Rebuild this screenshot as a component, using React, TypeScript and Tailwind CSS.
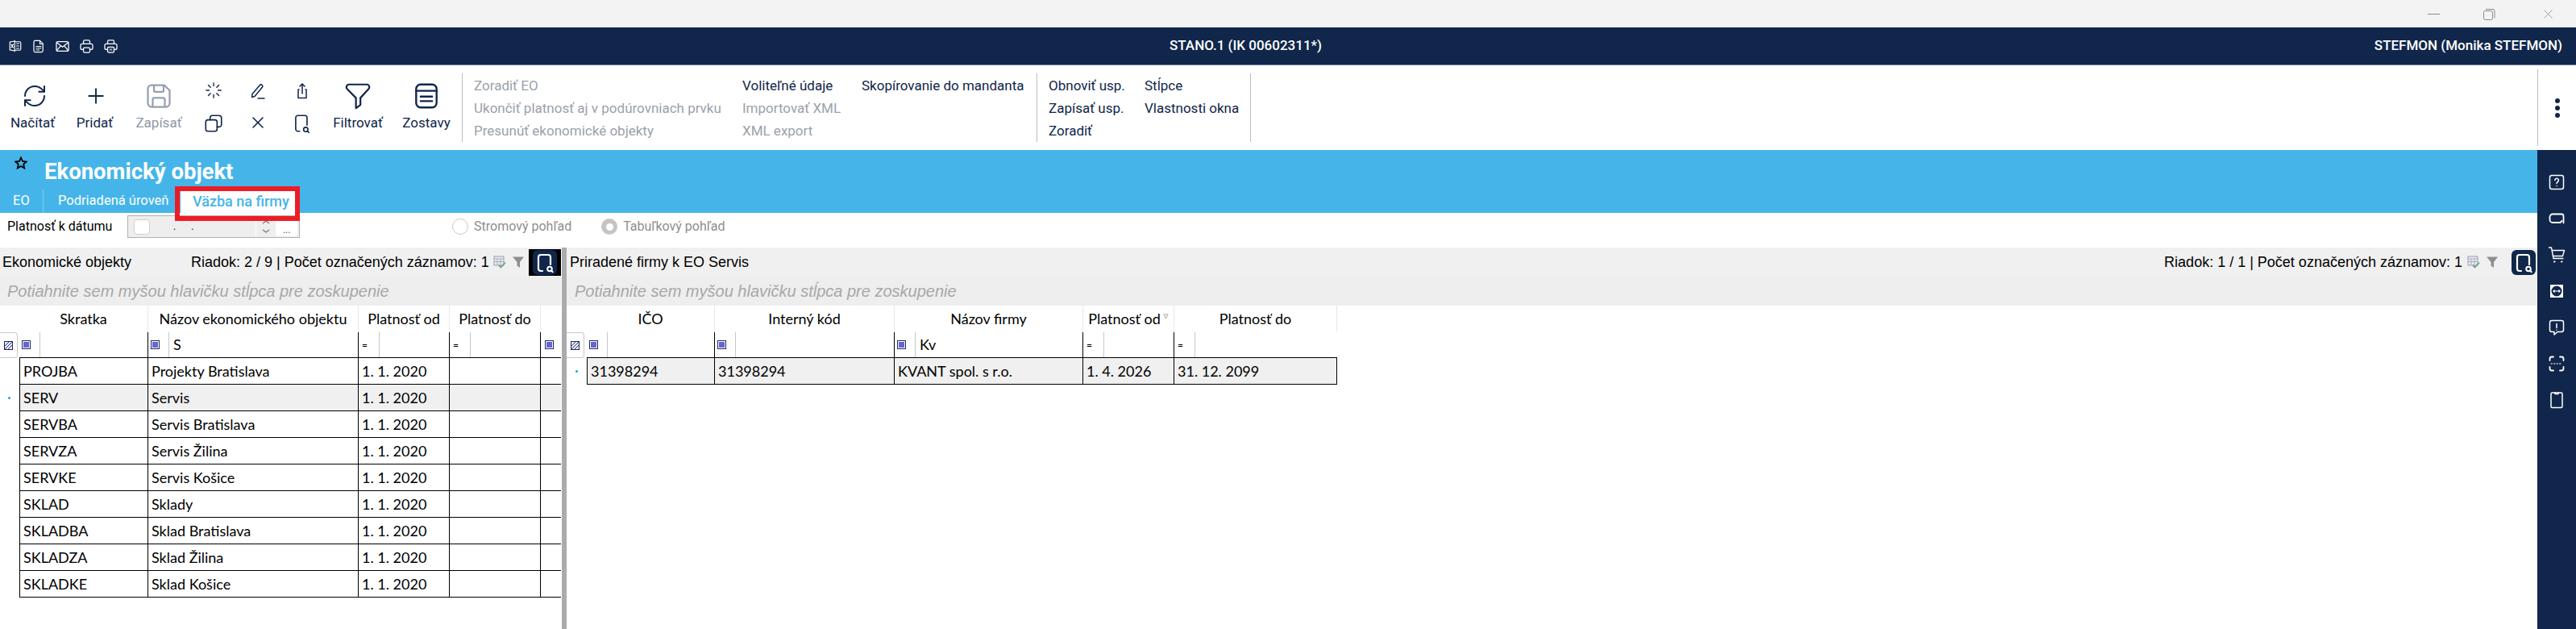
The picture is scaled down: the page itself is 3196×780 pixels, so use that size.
import { Loader, Plus, RefreshCw, X } from "lucide-react";
import type { ReactNode } from "react";

function Ico({ className, children, vb = "0 0 24 24", sw = 1.6 }: { className: string; children: ReactNode; vb?: string; sw?: number }) {
  return (
    <svg viewBox={vb} className={className} fill="none" stroke="currentColor" strokeWidth={sw} strokeLinecap="round" strokeLinejoin="round">
      {children}
    </svg>
  );
}

function TopIcons() {
  return (
    <div className="flex items-center gap-[11px] pl-[10px] text-white">
      <Ico className="w-[18px] h-[18px]">
        <path d="M11 3v18M11 4 3 5.500v13l8 1.500M11 5h8a2 2 0 0 1 2 2v10a2 2 0 0 1-2 2h-8M14 8h4M14 12h4M14 16h4M5.500 9.500l3 5M8.500 9.500l-3 5" />
      </Ico>
      <Ico className="w-[18px] h-[19px]">
        <path d="M6 2.500h8l5 5V19a2.500 2.500 0 0 1-2.500 2.500h-10A2.500 2.500 0 0 1 4 19V5a2.500 2.500 0 0 1 2-2.500zM14 2.500V8h5M8 12h8M8 15h8M8 18h5" />
      </Ico>
      <Ico className="w-[19px] h-[19px]">
        <rect x="2.500" y="4.500" width="19" height="15" rx="2.500" />
        <path d="m3 6 9 7 9-7M3 18.500l6.500-7.500M21 18.500 14.500 11" />
      </Ico>
      <Ico className="w-[19px] h-[19px]">
        <path d="M7 8V4.500a2 2 0 0 1 2-2h6a2 2 0 0 1 2 2V8M7 17H5a2.500 2.500 0 0 1-2.500-2.500v-4A2.500 2.500 0 0 1 5 8h14a2.500 2.500 0 0 1 2.500 2.500v4A2.500 2.500 0 0 1 19 17h-2" />
        <rect x="7" y="14" width="10" height="7.500" rx="1.500" />
      </Ico>
      <Ico className="w-[19px] h-[19px]">
        <path d="M7 8V4.500a2 2 0 0 1 2-2h6a2 2 0 0 1 2 2V8M7 17H5a2.500 2.500 0 0 1-2.500-2.500v-4A2.500 2.500 0 0 1 5 8h14a2.500 2.500 0 0 1 2.500 2.500v4A2.500 2.500 0 0 1 19 17h-2" />
        <rect x="7" y="13" width="10" height="8.500" rx="1.500" />
        <path d="m10 15.500 4 3M14 15.500l-4 3" strokeWidth={1} />
      </Ico>
    </div>
  );
}

function BigButton({ label, icon, width, muted, labelClass = "" }: { label: string; icon: ReactNode; width: string; muted?: boolean; labelClass?: string }) {
  return (
    <div className={`flex flex-col items-center ${width}`}>
      <div className={`h-[34px] flex items-center ${muted ? "text-[#94a0b0]" : "text-[#10264a]"}`}>{icon}</div>
      <span className={`mt-[6px] text-[17px] leading-[20px] whitespace-nowrap ${labelClass} ${muted ? "text-[#8e98a6]" : "text-[#10264a]"}`}>{label}</span>
    </div>
  );
}

function MenuCol({ items, width }: { items: { label: string; muted?: boolean }[]; width: string }) {
  return (
    <div className={`flex flex-col gap-[8px] ${width}`}>
      {items.map((item) => (
        <span key={item.label} className={`text-[17px] leading-[20px] whitespace-nowrap ${item.muted ? "text-[#9aa1ab]" : "text-[#10264a]"}`}>
          {item.label}
        </span>
      ))}
    </div>
  );
}

function Toolbar() {
  return (
    <div className="h-[105px] flex items-center bg-white font-['Roboto',sans-serif]">
      <div className="flex items-start w-[573px] pl-[5px] pt-[1px]">
        <BigButton
          label="Načítať"
          width="w-[76px]"
          labelClass="-ml-[5px]"
          icon={<RefreshCw className="w-[32px] h-[32px]" strokeWidth={1.5} />}
        />
        <BigButton label="Pridať" width="w-[76px]" labelClass="-ml-[3px]" icon={<Plus className="w-[30px] h-[30px]" strokeWidth={1.5} />} />
        <BigButton
          label="Zapísať"
          width="w-[80px]"
          muted
          icon={
            <Ico className="w-[36px] h-[36px]" sw={1.5}>
              <path d="M6 3h10.500L21 7.500V18a3 3 0 0 1-3 3H6a3 3 0 0 1-3-3V6a3 3 0 0 1 3-3zM8 3v4.500a1 1 0 0 0 1 1h6a1 1 0 0 0 1-1V3M7 21v-6a1.500 1.500 0 0 1 1.500-1.500h7A1.500 1.500 0 0 1 17 15v6" />
            </Ico>
          }
        />
        <div className="grid grid-cols-[55px_55px_55px] gap-y-[15px] justify-items-center w-[165px] text-[#10264a] -mt-[1px]">
          <Loader className="w-[22px] h-[22px]" strokeWidth={1.5} />
          <Ico className="w-[24px] h-[24px]" sw={1.5}>
            <path d="m5 15.500 9.500-11a2 2 0 0 1 3 2.600L8 18.500l-3.500 1zM12 21h8" />
          </Ico>
          <Ico className="w-[24px] h-[24px]" sw={1.5}>
            <path d="M8 10H7v10.500h10V10h-1M12 15V3M9 6l3-3 3 3" />
          </Ico>
          <Ico className="w-[26px] h-[26px]" sw={1.5}>
            <rect x="3" y="8" width="13" height="13" rx="2.500" />
            <path d="M8 8V5.500A2.500 2.500 0 0 1 10.500 3H18a3 3 0 0 1 3 3v7.500a2.500 2.500 0 0 1-2.500 2.500H16" />
          </Ico>
          <X className="w-[24px] h-[24px]" strokeWidth={1.6} />
          <Ico className="w-[26px] h-[26px]" sw={1.5}>
            <path d="M9 21H7a2.500 2.500 0 0 1-2.500-2.500v-13A2.500 2.500 0 0 1 7 3h8a2.500 2.500 0 0 1 2.500 2.500V14" />
            <circle cx="16" cy="19" r="2.500" />
            <path d="m18 21 1.500 1.500" />
          </Ico>
        </div>
        <BigButton
          label="Filtrovať"
          width="w-[84px]"
          icon={
            <Ico className="w-[38px] h-[38px]" sw={1.4}>
              <path d="M3 5a2 2 0 0 1 2-2h14a2 2 0 0 1 2 2c0 1-.5 1.500-1 2l-6 6.500V19l-3.500 2.500v-8L4 7c-.5-.5-1-1-1-2z" />
            </Ico>
          }
        />
        <BigButton
          label="Zostavy"
          width="w-[86px]"
          icon={
            <Ico className="w-[38px] h-[38px]" sw={1.5}>
              <rect x="4" y="3" width="16" height="18" rx="3.500" />
              <path d="M4 8h16M7.500 12.500h9M7.500 16h9" />
            </Ico>
          }
        />
      </div>
      <div className="w-px h-[85px] bg-[#bdbdbd]" />
      <div className="flex pl-[14px] w-[712px]">
        <MenuCol
          width="w-[333px]"
          items={[
            { label: "Zoradiť EO", muted: true },
            { label: "Ukončiť platnosť aj v podúrovniach prvku", muted: true },
            { label: "Presunúť ekonomické objekty", muted: true },
          ]}
        />
        <MenuCol
          width="w-[148px]"
          items={[{ label: "Voliteľné údaje" }, { label: "Importovať XML", muted: true }, { label: "XML export", muted: true }]}
        />
        <MenuCol width="w-[200px]" items={[{ label: "Skopírovanie do mandanta" }]} />
      </div>
      <div className="w-px h-[85px] bg-[#bdbdbd]" />
      <div className="flex pl-[14px] w-[264px]">
        <MenuCol width="w-[119px]" items={[{ label: "Obnoviť usp." }, { label: "Zapísať usp." }, { label: "Zoradiť" }]} />
        <MenuCol width="w-[130px]" items={[{ label: "Stĺpce" }, { label: "Vlastnosti okna" }]} />
      </div>
      <div className="w-px h-[85px] bg-[#bdbdbd]" />
      <div className="flex-1" />
      <div className="w-px h-[95px] bg-[#bdbdbd]" />
      <div className="w-[47px] flex flex-col items-center gap-[3px]">
        <span className="w-[6px] h-[6px] rounded-full bg-[#10264a]" />
        <span className="w-[6px] h-[6px] rounded-full bg-[#10264a]" />
        <span className="w-[6px] h-[6px] rounded-full bg-[#10264a]" />
      </div>
    </div>
  );
}

function Sidebar() {
  return (
    <div className="w-[48px] h-full bg-[#10264a] flex flex-col items-center gap-[21px] pt-[28px] text-white">
      <Ico className="w-[24px] h-[24px]" sw={1.5}>
        <rect x="3.500" y="3.500" width="17" height="17" rx="2.500" />
        <path d="M9.800 9.500a2.300 2.300 0 1 1 3.500 2c-.9.500-1.300 1-1.300 2M12 16.500v.1" />
      </Ico>
      <Ico className="w-[24px] h-[24px]" sw={1.8}>
        <path d="M20.500 17.500V9a2.500 2.500 0 0 0-2.500-2.500H7A3.500 3.500 0 0 0 3.500 10v3.500A3.500 3.500 0 0 0 7 17h9.500l2-2" />
      </Ico>
      <Ico className="w-[24px] h-[24px]" sw={1.4}>
        <path d="M2.500 3h3l2.500 13.500h12M6.500 6.500h15L19.500 13.500H8" />
        <path d="M9 20.500h.5M18 20.500h.5" strokeWidth={2} />
      </Ico>
      <svg viewBox="0 0 24 24" className="w-[24px] h-[24px]">
        <rect x="4" y="4" width="16" height="16" fill="#ffffff" />
        <circle cx="12" cy="12" r="6.500" fill="#10264a" />
        <path d="M7.500 12h9M9.500 10.500 8 12l1.500 1.500M14.500 10.500 16 12l-1.500 1.500" stroke="#ffffff" strokeWidth="1.200" fill="none" />
      </svg>
      <Ico className="w-[24px] h-[24px]" sw={1.5}>
        <path d="M6 3.500h12A2.500 2.500 0 0 1 20.500 6v9a2.500 2.500 0 0 1-2.500 2.500h-5L9 21v-3.500H6A2.500 2.500 0 0 1 3.500 15V6A2.500 2.500 0 0 1 6 3.500zM12 7.500v5M12 15v.1" />
      </Ico>
      <Ico className="w-[24px] h-[24px]" sw={1.8}>
        <path d="M8 3.500H6A2.500 2.500 0 0 0 3.500 6v2M16 3.500h2A2.500 2.500 0 0 1 20.500 6v2M8 20.500H6A2.500 2.500 0 0 1 3.500 18v-2M16 20.500h2a2.500 2.500 0 0 0 2.500-2.500v-2" />
        <path d="M5 12h14" strokeWidth={1} strokeDasharray="1.500 2" />
      </Ico>
      <Ico className="w-[24px] h-[24px]" sw={1.5}>
        <rect x="5" y="3" width="14" height="18.500" rx="1.500" />
        <path d="M10 3v1.500h4V3" />
      </Ico>
    </div>
  );
}

function BlueBox() {
  return (
    <span className="w-[11px] h-[11px] border border-[#1c2a5a] bg-white flex items-center justify-center shrink-0">
      <span className="w-[7px] h-[7px] bg-[#6a63cf]" />
    </span>
  );
}

function SelectAll() {
  return (
    <div className="w-[22px] h-[32px] rounded-r-[4px] border border-l-0 border-[#c9c9c9] flex items-center justify-center shrink-0">
      <svg viewBox="0 0 11 11" className="w-[11px] h-[11px]">
        <rect x="0.500" y="0.500" width="10" height="10" fill="#e8e6f7" stroke="#1c2a5a" />
        <path d="M1 10 10 1M1 6l5-5M5 10l5-5" stroke="#1c2a5a" strokeWidth="0.900" />
      </svg>
    </div>
  );
}

function TableIcons() {
  return (
    <div className="flex items-center gap-[7px] shrink-0">
      <svg viewBox="0 0 16 16" className="w-[16px] h-[16px]">
        <rect x="1" y="1" width="12" height="11" fill="#e9e9ef" stroke="#9a9fb0" />
        <path d="M1 4h12M1 7.500h12M5 4v8M9 4v8" stroke="#9a9fb0" strokeWidth="0.800" />
        <path d="m7 12 2.500 2.500L15 8.500" fill="none" stroke="#5fa886" strokeWidth="1.800" />
      </svg>
      <svg viewBox="0 0 16 16" className="w-[16px] h-[16px]">
        <path d="M1 1.500h14L10 8v7L6.500 12.500V8z" fill="#8f8f8f" />
      </svg>
    </div>
  );
}

function SearchButton() {
  return (
    <div className="w-[30px] h-[31px] rounded-[6px] bg-[#10264a] flex items-center justify-center">
      <svg viewBox="0 0 30 31" className="w-[30px] h-[31px]" fill="none" stroke="#ffffff" strokeWidth="2.200" strokeLinecap="round">
        <path d="M12 26H10a3 3 0 0 1-3-3V9a3 3 0 0 1 3-3h9a3 3 0 0 1 3 3v9" />
        <circle cx="21" cy="23.500" r="2.800" strokeWidth="2" />
        <path d="m23.200 25.800 1.500 1.500" strokeWidth="2" />
      </svg>
    </div>
  );
}

const LEFT_ROWS = [
  ["PROJBA", "Projekty Bratislava"],
  ["SERV", "Servis"],
  ["SERVBA", "Servis Bratislava"],
  ["SERVZA", "Servis Žilina"],
  ["SERVKE", "Servis Košice"],
  ["SKLAD", "Sklady"],
  ["SKLADBA", "Sklad Bratislava"],
  ["SKLADZA", "Sklad Žilina"],
  ["SKLADKE", "Sklad Košice"],
];

function HeadCell({ width, children, last }: { width: string; children?: ReactNode; last?: boolean }) {
  return (
    <div className={`${width} h-full flex items-center justify-center whitespace-nowrap text-[18px] ${last ? "" : "border-r border-[#e8e8e8]"}`}>
      {children}
    </div>
  );
}

function FilterCell({ width, gap, mark, value, last }: { width: string; gap: string; mark: ReactNode; value?: string; last?: boolean }) {
  return (
    <div className={`${width} h-full flex items-stretch ${last ? "" : "border-r border-black"}`}>
      <div className={`${gap} flex items-center pl-[3px] border-r border-[#c8c8c8]`}>{mark}</div>
      <div className="flex-1 flex items-center pl-[5px] text-[18px]">{value}</div>
    </div>
  );
}

const Eq = <span className="text-[12px] leading-none pl-[1px]">=</span>;

function Cell({ width, children, last }: { width: string; children?: ReactNode; last?: boolean }) {
  return (
    <div className={`${width} h-full flex items-center pl-[4px] whitespace-nowrap text-[18px] ${last ? "" : "border-r border-black"}`}>{children}</div>
  );
}

function LeftPane() {
  return (
    <div className="w-[696px] h-full flex flex-col">
      <div className="h-[36px] bg-[#f0f0f0] flex items-center font-['Liberation_Sans',sans-serif] text-[18px] text-black">
        <span className="pl-[3px] w-[237px] whitespace-nowrap">Ekonomické objekty</span>
        <span className="w-[375px] whitespace-nowrap">Riadok: 2 / 9 | Počet označených záznamov: 1</span>
        <TableIcons />
        <div className="ml-[5px] w-[40px] h-[33px] bg-black flex items-center justify-center">
          <SearchButton />
        </div>
      </div>
      <div className="h-[36px] bg-[#eeeeee] flex items-center pl-[9px] font-['Liberation_Sans',sans-serif] italic text-[#a8a8a8] text-[20px] whitespace-nowrap">
        Potiahnite sem myšou hlavičku stĺpca pre zoskupenie
      </div>
      <div className="font-['Lato',sans-serif] text-black">
        <div className="h-[33px] flex pl-[24px]">
          <HeadCell width="w-[160px]">Skratka</HeadCell>
          <HeadCell width="w-[261px]">Názov ekonomického objektu</HeadCell>
          <HeadCell width="w-[113px]">Platnosť od</HeadCell>
          <HeadCell width="w-[113px]">Platnosť do</HeadCell>
        </div>
        <div className="h-[32px] flex">
          <div className="w-[24px] flex items-center">
            <SelectAll />
          </div>
          <div className="flex-1 flex h-full border-b border-black">
            <FilterCell width="w-[160px]" gap="w-[26px]" mark={<BlueBox />} />
            <FilterCell width="w-[261px]" gap="w-[26px]" mark={<BlueBox />} value="S" />
            <FilterCell width="w-[113px]" gap="w-[26px]" mark={Eq} />
            <FilterCell width="w-[113px]" gap="w-[26px]" mark={Eq} />
            <div className="flex-1 flex items-center pl-[5px]">
              <BlueBox />
            </div>
          </div>
        </div>
        {LEFT_ROWS.map(([code, name]) => (
          <div key={code} className="h-[33px] flex">
            <div className="w-[24px] flex items-center justify-center">
              {code === "SERV" && <span className="w-[3px] h-[3px] rounded-full bg-[#0ea5e0] mr-[2px]" />}
            </div>
            <div className={`flex-1 h-full flex border-l border-b border-black ${code === "SERV" ? "bg-[#f0f0f0]" : ""}`}>
              <Cell width="w-[159px]">{code}</Cell>
              <Cell width="w-[261px]">{name}</Cell>
              <Cell width="w-[113px]">1. 1. 2020</Cell>
              <Cell width="w-[113px]" />
              <Cell width="flex-1" last />
            </div>
          </div>
        ))}
      </div>
    </div>
  );
}

function RightPane() {
  return (
    <div className="flex-1 h-full flex flex-col">
      <div className="h-[36px] bg-[#f0f0f0] flex items-center font-['Liberation_Sans',sans-serif] text-[18px] text-black pr-[2px]">
        <span className="pl-[4px] whitespace-nowrap">Priradené firmy k EO Servis</span>
        <div className="flex-1" />
        <span className="whitespace-nowrap pr-[6px]">Riadok: 1 / 1 | Počet označených záznamov: 1</span>
        <TableIcons />
        <div className="ml-[16px]">
          <SearchButton />
        </div>
      </div>
      <div className="h-[36px] bg-[#eeeeee] flex items-center pl-[10px] font-['Liberation_Sans',sans-serif] italic text-[#a8a8a8] text-[20px] whitespace-nowrap">
        Potiahnite sem myšou hlavičku stĺpca pre zoskupenie
      </div>
      <div className="font-['Lato',sans-serif] text-black">
        <div className="h-[33px] flex pl-[25px]">
          <HeadCell width="w-[159px]">IČO</HeadCell>
          <HeadCell width="w-[223px]">Interný kód</HeadCell>
          <HeadCell width="w-[234px]">Názov firmy</HeadCell>
          <HeadCell width="w-[113px]">
            Platnosť od
            <svg viewBox="0 0 8 8" className="w-[7px] h-[7px] ml-[3px] mb-[6px]">
              <path d="M1 1h6L4 7z" fill="none" stroke="#9a9a9a" />
            </svg>
          </HeadCell>
          <HeadCell width="w-[202px]">Platnosť do</HeadCell>
        </div>
        <div className="h-[32px] flex">
          <div className="w-[25px] flex items-center">
            <SelectAll />
          </div>
          <div className="w-[931px] flex h-full border-b border-black">
            <FilterCell width="w-[159px]" gap="w-[26px]" mark={<BlueBox />} />
            <FilterCell width="w-[223px]" gap="w-[26px]" mark={<BlueBox />} />
            <FilterCell width="w-[234px]" gap="w-[26px]" mark={<BlueBox />} value="Kv" />
            <FilterCell width="w-[113px]" gap="w-[26px]" mark={Eq} />
            <FilterCell width="w-[202px]" gap="w-[26px]" mark={Eq} last />
          </div>
        </div>
        <div className="h-[33px] flex">
          <div className="w-[25px] flex items-center justify-center">
            <span className="w-[3px] h-[3px] rounded-full bg-[#0ea5e0]" />
          </div>
          <div className="w-[931px] h-full flex border-l border-b border-r border-black bg-[#f0f0f0]">
            <Cell width="w-[158px]">31398294</Cell>
            <Cell width="w-[223px]">31398294</Cell>
            <Cell width="w-[234px]">KVANT spol. s r.o.</Cell>
            <Cell width="w-[113px]">1. 4. 2026</Cell>
            <Cell width="flex-1" last>
              31. 12. 2099
            </Cell>
          </div>
        </div>
      </div>
    </div>
  );
}

function Radio({ checked, label }: { checked?: boolean; label: string }) {
  return (
    <div className="flex items-center gap-[7px]">
      {checked ? (
        <span className="w-[20px] h-[20px] rounded-full bg-[#c4c4c4] flex items-center justify-center">
          <span className="w-[9px] h-[9px] rounded-full bg-white" />
        </span>
      ) : (
        <span className="w-[20px] h-[20px] rounded-full border border-[#c8c8c8] bg-white" />
      )}
      <span className="text-[16px] text-[#8e8e8e] whitespace-nowrap">{label}</span>
    </div>
  );
}

export default function App() {
  return (
    <div className="w-[3196px] h-[780px] overflow-hidden flex flex-col bg-white font-['Roboto',sans-serif]">
      <div className="h-[34px] bg-[#f3f3f3] flex items-center justify-end text-[#8a8a8a]">
        <span className="w-[15px] h-[1px] bg-[#8a8a8a] mr-[54px]" />
        <svg viewBox="0 0 15 15" className="w-[15px] h-[15px] mr-[56px]" fill="none" stroke="currentColor">
          <rect x="0.500" y="3.500" width="11" height="11" rx="2" />
          <path d="M3 1.500h9a2 2 0 0 1 2 2v9" />
        </svg>
        <X className="w-[19px] h-[19px] mr-[25px]" strokeWidth={1} />
      </div>
      <div className="h-[47px] bg-[#10264a] border-b border-b-[#6f7f95] relative flex items-center justify-between">
        <TopIcons />
        <span className="absolute left-[1451px] text-[17px] font-medium text-white whitespace-nowrap">STANO.1 (IK 00602311*)</span>
        <span className="text-[17px] font-medium text-white pr-[17px] whitespace-nowrap">STEFMON (Monika STEFMON)</span>
      </div>
      <Toolbar />
      <div className="flex-1 min-h-0 flex">
        <div className="flex-1 min-w-0 flex flex-col">
          <div className="h-[78px] bg-[#45b5e9] relative flex flex-col justify-between">
            <div className="flex items-start pl-[18px] pt-[8px]">
              <svg viewBox="0 0 16 16" className="w-[16px] h-[16px]">
                <path d="m8 1.500 2 4.500 4.800.5-3.600 3.200 1 4.800L8 12l-4.200 2.500 1-4.800L1.200 6.500 6 6z" fill="none" stroke="#000000" strokeWidth="1.800" />
              </svg>
              <span className="ml-[21px] text-[27.5px] leading-[38px] font-bold text-white whitespace-nowrap">Ekonomický objekt</span>
            </div>
            <div className="h-[29px] flex items-stretch text-[16.5px]">
              <div className="w-[54px] pl-[16px] flex items-center text-white border-r border-[#7fcdf0]">EO</div>
              <div className="w-[170px] pl-[18px] flex items-center text-white whitespace-nowrap">Podriadená úroveň</div>
              <div className="w-[142px] bg-white flex items-center pl-[15px] text-[18px] text-[#45b5e9] font-medium whitespace-nowrap">Väzba na firmy</div>
            </div>
            <div className="absolute left-[217px] top-[45px] w-[155px] h-[43px] border-[6px] border-[#ed1c24] z-10" />
          </div>
          <div className="h-[34px] flex items-center text-[16px] text-black">
            <span className="pl-[9px] w-[158px] whitespace-nowrap">Platnosť k dátumu</span>
            <div className="w-[214px] h-[28px] bg-[#eeeeee] border border-[#b0b0b0] flex items-center">
              <span className="ml-[7px] w-[20px] h-[19px] rounded-[4px] bg-white border border-[#cfcfcf]" />
              <span className="ml-[29px] text-[12px] leading-none">.</span>
              <span className="ml-[19px] text-[12px] leading-none">.</span>
              <div className="ml-[77px] w-[25px] flex flex-col items-center text-[#777] border-l border-white h-full justify-center">
                <svg viewBox="0 0 10 18" className="w-[10px] h-[18px]" fill="none" stroke="currentColor" strokeWidth="1.300">
                  <path d="m1 5 4-3 4 3M1 13l4 3 4-3" />
                </svg>
              </div>
              <div className="flex-1 h-[24px] mr-[2px] bg-white rounded-[3px] flex items-end justify-center text-[12px] leading-[16px] text-[#555]">...</div>
            </div>
            <div className="ml-[189px] flex gap-[37px]">
              <Radio label="Stromový pohľad" />
              <Radio checked label="Tabuľkový pohľad" />
            </div>
          </div>
          <div className="h-[9px]" />
          <div className="flex-1 min-h-0 flex">
            <LeftPane />
            <div className="w-[6px] h-full bg-[#ababab] ml-[1px]" />
            <RightPane />
          </div>
        </div>
        <Sidebar />
      </div>
    </div>
  );
}
